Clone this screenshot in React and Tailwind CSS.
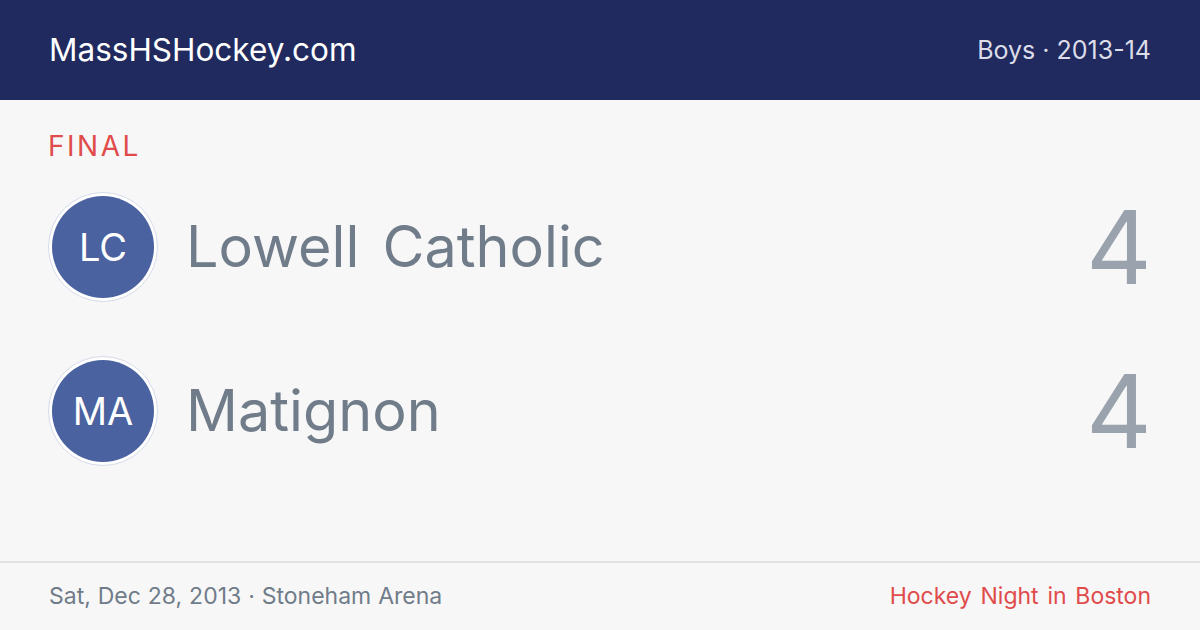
import React from "react";

function Team({ abbr, name, score }) {
  return (
    <div className="flex items-center h-[110px]">
      <div className="w-[110px] h-[110px] rounded-full border border-[#d6dbea] bg-white p-[3px] flex-none">
        <div className="w-full h-full rounded-full bg-[#4a62a0] flex items-center justify-center text-white text-[38px] leading-none">
          {abbr}
        </div>
      </div>
      <div className="ml-[28px] text-[57.5px] leading-none text-[#707c89] flex-1 [word-spacing:0.12em]">{name}</div>
      <div className="text-[102px] leading-none text-[#9aa3ad]">{score}</div>
    </div>
  );
}

export default function App() {
  return (
    <div className="w-[1200px] h-[630px] bg-[#f7f7f7] flex flex-col" style={{ fontFamily: "Inter, 'Noto Sans', sans-serif" }}>
      <div className="h-[100px] bg-[#202a5e] flex items-center justify-between px-[49px] flex-none">
        <div className="text-white text-[31.5px] leading-none">MassHSHockey.com</div>
        <div className="text-[#dcdde8] text-[25px] leading-none">Boys · 2013-14</div>
      </div>
      <div className="flex-1 px-[48px] pt-[32px] flex flex-col">
        <div className="text-[#e04b4b] text-[28px] leading-none tracking-[0.09em]">FINAL</div>
        <div className="mt-[32px] flex flex-col gap-[54px]">
          <Team abbr="LC" name="Lowell Catholic" score="4" />
          <Team abbr="MA" name="Matignon" score="4" />
        </div>
      </div>
      <div className="h-[69px] border-t-2 border-[#e2e2e2] flex items-center justify-between px-[49px] flex-none">
        <div className="text-[#707c89] text-[23px] leading-none [word-spacing:0.02em]">Sat, Dec 28, 2013 · Stoneham Arena</div>
        <div className="text-[#e04b4b] text-[23px] leading-none [word-spacing:0.1em]">Hockey Night in Boston</div>
      </div>
    </div>
  );
}
